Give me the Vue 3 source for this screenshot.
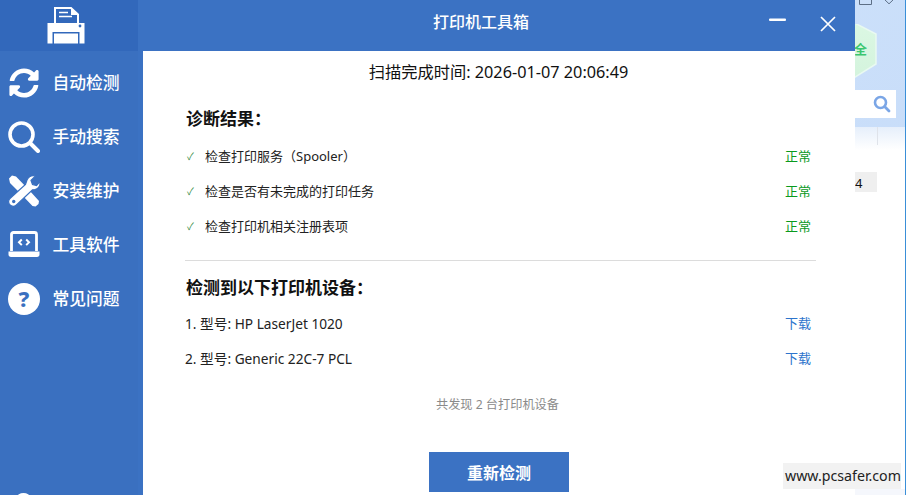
<script setup>
import { ref } from "vue";

const navItems = [
  { key: "auto", label: "自动检测" },
  { key: "manual", label: "手动搜索" },
  { key: "repair", label: "安装维护" },
  { key: "tools", label: "工具软件" },
  { key: "faq", label: "常见问题" },
];

const checks = ref([
  { label: "检查打印服务（Spooler）", status: "正常" },
  { label: "检查是否有未完成的打印任务", status: "正常" },
  { label: "检查打印机相关注册表项", status: "正常" },
]);

const devices = ref([
  { label: "1. 型号: HP LaserJet 1020" },
  { label: "2. 型号: Generic 22C-7 PCL" },
]);
</script>

<template>
  <div class="screen">
    <!-- 后面那个窗口露出来的部分 -->
    <div class="behind">
      <svg class="behind-caption" width="46" height="6" viewBox="0 0 46 6">
        <path d="M3.5 -1V4.5H15.5V-1" fill="none" stroke="#5d6f86" stroke-width="1" />
        <path d="M28 -1L33 3.8L38 -1" fill="none" stroke="#5d6f86" stroke-width="1" />
      </svg>
      <svg class="behind-hex" width="22" height="64" viewBox="0 0 22 64">
        <defs>
          <linearGradient id="hexFill" x1="0" y1="0" x2="0" y2="1">
            <stop offset="0%" stop-color="#dcf8e4" />
            <stop offset="100%" stop-color="#d3f3dc" />
          </linearGradient>
        </defs>
        <path d="M-14 -8L21 10V40L-14 62Z" fill="url(#hexFill)" stroke="#e9f9f1" stroke-width="1.5" />
      </svg>
      <span class="behind-word">全</span>
      <div class="behind-search">
        <svg width="18" height="18" viewBox="0 0 18 18">
          <circle cx="7.5" cy="7.5" r="5.5" fill="none" stroke="#7ba6e6" stroke-width="2.6" />
          <path d="M11.8 11.8L16 16" stroke="#7ba6e6" stroke-width="2.8" stroke-linecap="round" />
        </svg>
      </div>
      <div class="behind-rule"></div>
      <div class="behind-chip">4</div>
    </div>

    <div class="window">
      <aside class="sidebar">
        <div class="logo">
          <svg width="38" height="37" viewBox="0 0 38 37">
            <path d="M8 17V1H24L31 7.5V17" fill="none" stroke="#fff" stroke-width="2" />
            <path d="M24 1L31.5 8H24Z" fill="#fff" />
            <path d="M12 5.5H21M12 9.5H25" stroke="#fff" stroke-width="1.4" />
            <path d="M0.5 16H37.5V36.5H32.5V25H5.5V36.5H0.5Z" fill="#fff" />
            <rect x="7" y="26.5" width="24" height="10" fill="#fff" />
            <circle cx="33" cy="19" r="1.4" fill="#3268bb" />
          </svg>
        </div>
        <nav class="nav">
          <div v-for="item in navItems" :key="item.key" class="nav-item">
            <span class="nav-icon">
              <svg v-if="item.key === 'auto'" width="32" height="32" viewBox="-16 -16 544 544">
                <path fill="#fff" d="M370.72 133.28C339.458 104.008 298.888 87.962 255.848 88c-77.458.068-144.328 53.178-162.791 126.85-1.344 5.363-6.122 9.15-11.651 9.15H24.103c-7.498 0-13.194-6.807-11.807-14.176C33.933 94.924 134.813 8 256 8c66.448 0 126.791 26.136 171.315 68.685L463.03 40.97C478.149 25.851 504 36.559 504 57.941V192c0 13.255-10.745 24-24 24H345.941c-21.382 0-32.09-25.851-16.971-40.971l41.75-41.749zM32 296h134.059c21.382 0 32.09 25.851 16.971 40.971l-41.75 41.75c31.262 29.273 71.835 45.319 114.876 45.28 77.418-.07 144.315-53.144 162.787-126.849 1.344-5.363 6.122-9.15 11.651-9.15h57.304c7.498 0 13.194 6.807 11.807 14.176C478.067 417.076 377.187 504 256 504c-66.448 0-126.791-26.136-171.315-68.685L48.97 471.03C33.851 486.149 8 475.441 8 454.059V320c0-13.255 10.745-24 24-24z" />
              </svg>
              <svg v-else-if="item.key === 'manual'" width="32" height="32" viewBox="0 0 32 32">
                <circle cx="13.5" cy="13.5" r="11.5" fill="none" stroke="#fff" stroke-width="3.6" />
                <path d="M22.5 22.5L30 30" stroke="#fff" stroke-width="4" stroke-linecap="round" />
              </svg>
              <svg v-else-if="item.key === 'repair'" width="32" height="32" viewBox="0 0 32 32">
                <path d="M1 3.5L4 0.5L8 1.5L21 15L31 26L30.5 29L27.5 31.5L24.5 31L13 19L2 8Z" fill="#fff" />
                <path d="M19 5C20.5 1.8 24 0 27.5 1L23 5.5L24.5 9.5L28.5 10.5L32 6.5C32.5 10.5 30.5 13.5 27 14.5L24.5 14.8L9 29.5C7 31.8 3.8 31.8 2 30C0 28 0.2 25 2.2 23.2L17.5 9.5Z" fill="#fff" stroke="#3a70c0" stroke-width="1.2" />
                <circle cx="5.7" cy="26.5" r="1.7" fill="#3a70c0" />
              </svg>
              <svg v-else-if="item.key === 'tools'" width="32" height="32" viewBox="0 0 32 32">
                <path d="M3.5 22V5.5C3.5 4.3 4.3 3.5 5.5 3.5H26.5C27.7 3.5 28.5 4.3 28.5 5.5V22" fill="none" stroke="#fff" stroke-width="2.8" />
                <path d="M0.5 22.5H31.5V25.5C31.5 27 30.5 28 29 28H3C1.5 28 0.5 27 0.5 25.5Z" fill="#fff" />
                <path d="M13.8 10.5L11 13.3L13.8 16.1M18.2 10.5L21 13.3L18.2 16.1" fill="none" stroke="#fff" stroke-width="2" />
              </svg>
              <svg v-else width="32" height="32" viewBox="0 0 32 32">
                <circle cx="16" cy="16" r="16" fill="#fff" />
                <text x="16" y="23.5" text-anchor="middle" class="help-mark">?</text>
              </svg>
            </span>
            <span class="nav-label">{{ item.label }}</span>
          </div>
        </nav>
        <div class="nav-more"></div>
      </aside>

      <div class="panel">
        <header class="titlebar">
          <span class="title">打印机工具箱</span>
          <div class="win-actions">
            <svg class="win-min" width="17" height="4" viewBox="0 0 17 4">
              <rect y="0.5" width="17" height="2.4" rx="1" fill="#fff" />
            </svg>
            <svg class="win-close" width="16" height="16" viewBox="0 0 16 16">
              <path d="M1 1L15 15M15 1L1 15" stroke="#fff" stroke-width="1.7" />
            </svg>
          </div>
        </header>

        <main class="content">
          <p class="scan-time">扫描完成时间: 2026-01-07 20:06:49</p>

          <h3 class="section-title">诊断结果：</h3>
          <ul class="rows">
            <li v-for="c in checks" :key="c.label" class="row">
              <span class="check">✓</span>
              <span class="row-text">{{ c.label }}</span>
              <span class="ok">{{ c.status }}</span>
            </li>
          </ul>

          <div class="divider"></div>

          <h3 class="section-title device-title">检测到以下打印机设备：</h3>
          <ul class="rows device-rows">
            <li v-for="d in devices" :key="d.label" class="row">
              <span class="row-text">{{ d.label }}</span>
              <a class="download">下载</a>
            </li>
          </ul>

          <p class="summary">共发现 2 台打印机设备</p>

          <button class="rescan">重新检测</button>
        </main>
      </div>
    </div>

    <div class="watermark">www.pcsafer.com</div>
  </div>
</template>

<style scoped>
.screen {
  position: relative;
  width: 906px;
  height: 495px;
  overflow: hidden;
  background: #fff;
  font-family: "Noto Sans", "Noto Sans CJK SC", sans-serif;
  color: #1a1a1a;
}

.behind {
  position: absolute;
  inset: 0;
  border-right: 1px solid #3a8fd8;
  background: linear-gradient(#f5f7fc, #f5f7fc) 0 489px / 100% 6px no-repeat,
    linear-gradient(#fff, #fff) 0 150px / 100% 339px no-repeat,
    linear-gradient(#e6effb, #ffffff) 0 127px / 100% 23px no-repeat,
    linear-gradient(135deg, #d6e8fd 0%, #c4daf8 100%);
}

.behind-caption {
  position: absolute;
  left: 856px;
  top: 0;
}

.behind-hex {
  position: absolute;
  left: 855px;
  top: 24px;
}

.behind-word {
  position: absolute;
  left: 854px;
  top: 40px;
  font-size: 13px;
  line-height: 18px;
  font-weight: 700;
  color: #3bc66f;
}

.behind-search {
  position: absolute;
  left: 800px;
  top: 90px;
  width: 96px;
  height: 28px;
  background: #fff;
  display: flex;
  align-items: center;
  justify-content: flex-end;
  padding-right: 5px;
  box-sizing: border-box;
}

.behind-rule {
  position: absolute;
  left: 877px;
  top: 127px;
  width: 1px;
  height: 18px;
  background: #dfe3ea;
}

.behind-chip {
  position: absolute;
  left: 840px;
  top: 172px;
  width: 37px;
  height: 20px;
  padding-left: 15px;
  box-sizing: border-box;
  background: #efefef;
  font-size: 13px;
  line-height: 22px;
  color: #111;
}

.window {
  position: absolute;
  left: 0;
  top: 0;
  width: 855px;
  height: 495px;
  display: flex;
}

.sidebar {
  position: relative;
  width: 143px;
  flex: none;
  background: #3a70c0;
  box-sizing: border-box;
  border-right: 5px solid #3b72c3;
}

.logo {
  height: 51px;
  background: #3268bb;
  display: flex;
  justify-content: center;
  padding-top: 7px;
  padding-right: 7px;
  box-sizing: border-box;
}

.nav {
  display: flex;
  flex-direction: column;
  gap: 22px;
  padding-top: 16px;
}

.nav-item {
  display: flex;
  align-items: center;
  height: 32px;
  padding-left: 8px;
}

.nav-icon {
  width: 32px;
  height: 32px;
  flex: none;
  display: block;
}

.nav-label {
  margin: 0 0 2px 12.5px;
  font-size: 16.8px;
  font-weight: 500;
  color: #fff;
  white-space: nowrap;
}

.help-mark {
  font-size: 22px;
  font-weight: 800;
  fill: #3a70c0;
  font-family: "Noto Sans", sans-serif;
}

.nav-more {
  position: absolute;
  left: 17px;
  top: 493px;
  width: 13px;
  height: 8px;
  border-radius: 50%;
  background: #fff;
}

.panel {
  flex: 1;
  min-width: 0;
  display: flex;
  flex-direction: column;
  background: #fff;
}

.titlebar {
  height: 51px;
  flex: none;
  background: #3b72c3;
  display: flex;
  align-items: center;
  padding: 0 19px 9px 290px;
  box-sizing: border-box;
}

.title {
  font-size: 16px;
  font-weight: 500;
  color: #fff;
}

.win-actions {
  margin-left: auto;
  display: flex;
  align-items: center;
  gap: 34px;
}

.win-min {
  margin-bottom: 2px;
}

.win-close {
  margin-top: 6px;
}

.content {
  flex: 1;
  padding: 0 39px 0 42px;
  display: flex;
  flex-direction: column;
}

.scan-time {
  margin: 10px 0 0;
  padding-right: 4px;
  text-align: center;
  font-size: 16.25px;
  line-height: 23px;
  color: #111;
}

.section-title {
  margin: 23px 0 0;
  padding-left: 1px;
  font-size: 17px;
  line-height: 24px;
  font-weight: 700;
  color: #111;
}

.device-title {
  margin-top: 15px;
}

.rows {
  list-style: none;
  margin: 7px 0 0;
  padding: 0;
}

.device-rows {
  margin-top: 5px;
}

.device-rows .row {
  font-size: 13.7px;
}

.row {
  display: flex;
  align-items: center;
  height: 35px;
  font-size: 13px;
  color: #222;
  padding-right: 5px;
}

.check {
  width: 20px;
  padding-left: 2px;
  box-sizing: border-box;
  font-size: 10px;
  color: #2f8a3f;
}

.row-text {
  flex: 1;
}

.ok {
  color: #0a9a1e;
}

.download {
  font-size: 13px;
  color: #2d74cc;
}

.divider {
  height: 1px;
  background: #dcdcdc;
  margin-top: 17px;
}

.summary {
  margin: 21px 0 0;
  padding-right: 6px;
  text-align: center;
  font-size: 12.2px;
  line-height: 18px;
  color: #8a8a8a;
}

.rescan {
  align-self: center;
  margin: 38px 3px 0 0;
  width: 140px;
  height: 40px;
  border: 0;
  background: #3b72c3;
  color: #fff;
  font-family: inherit;
  font-size: 16px;
  font-weight: 700;
}

.watermark {
  position: absolute;
  left: 783px;
  top: 463px;
  width: 118px;
  height: 26px;
  padding-left: 2px;
  box-sizing: border-box;
  background: #f2f2f2;
  font-family: "Noto Sans", sans-serif;
  font-size: 14.2px;
  line-height: 26px;
  color: #222;
  text-align: center;
  white-space: nowrap;
}
</style>
